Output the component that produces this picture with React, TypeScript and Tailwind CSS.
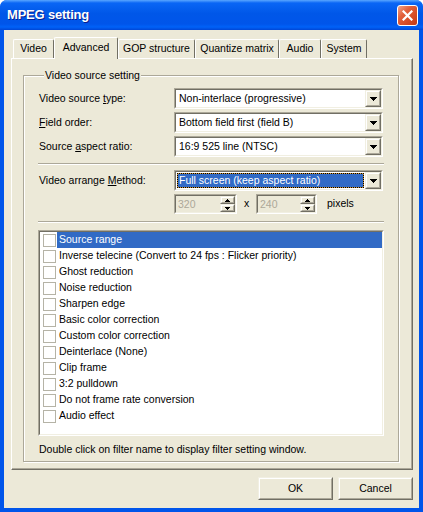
import React from "react";

const ITEMS = [
  "Source range",
  "Inverse telecine (Convert to 24 fps : Flicker priority)",
  "Ghost reduction",
  "Noise reduction",
  "Sharpen edge",
  "Basic color correction",
  "Custom color correction",
  "Deinterlace (None)",
  "Clip frame",
  "3:2 pulldown",
  "Do not frame rate conversion",
  "Audio effect",
];

const TABS = [
  { label: "Video", w: "w-[41px]" },
  { label: "Advanced", w: "w-[64px]", active: true },
  { label: "GOP structure", w: "w-[77px]" },
  { label: "Quantize matrix", w: "w-[84px]" },
  { label: "Audio", w: "w-[42px]" },
  { label: "System", w: "w-[46px]" },
];

// classic 2px sunken frame (edit, combo, listbox)
function Sunken({
  className = "",
  innerClassName = "",
  children,
}: {
  className?: string;
  innerClassName?: string;
  children?: React.ReactNode;
}) {
  return (
    <div className={`border border-t-[#ACA899] border-l-[#ACA899] border-b-white border-r-white ${className}`}>
      <div
        className={`h-full border border-t-[#716F64] border-l-[#716F64] border-b-[#F1EFE2] border-r-[#F1EFE2] ${innerClassName}`}
      >
        {children}
      </div>
    </div>
  );
}

function Raised({ className = "", children }: { className?: string; children?: React.ReactNode }) {
  return (
    <div className={`border border-t-[#F1EFE2] border-l-[#F1EFE2] border-b-[#716F64] border-r-[#716F64] ${className}`}>
      <div className="flex h-full w-full items-center justify-center border border-t-white border-l-white border-b-[#ACA899] border-r-[#ACA899] bg-[#ECE9D8]">
        {children}
      </div>
    </div>
  );
}

function ArrowDown() {
  return (
    <svg width="7" height="4" viewBox="0 0 7 4" shapeRendering="crispEdges">
      <path d="M0 0h7v1h-1v1h-1v1h-1v1h-1v-1h-1v-1h-1v-1h-1z" fill="#000" />
    </svg>
  );
}

function SmallArrow({ up }: { up?: boolean }) {
  return (
    <svg width="5" height="3" viewBox="0 0 5 3" shapeRendering="crispEdges">
      <path
        d={up ? "M2 0h1v1h1v1h1v1h-5v-1h1v-1h1z" : "M0 0h5v1h-1v1h-1v1h-1v-1h-1v-1h-1z"}
        fill="#000"
      />
    </svg>
  );
}

function Combo({ value, focused }: { value: string; focused?: boolean }) {
  return (
    <Sunken className="h-[21px] w-[209px]" innerClassName="flex items-center bg-white">
      <div className="flex min-w-0 flex-1 items-center px-[1px]">
        {focused ? (
          <div className="h-[15px] flex-1 border border-[#CE953A] bg-[#316AC5] pl-[1px] leading-[13px] whitespace-nowrap text-white outline-1 -outline-offset-1 outline-black outline-dotted">
            {value}
          </div>
        ) : (
          <span className="pl-[2px] whitespace-nowrap">{value}</span>
        )}
      </div>
      <Raised className="h-[17px] w-[16px] shrink-0">
        <ArrowDown />
      </Raised>
    </Sunken>
  );
}

function SpinEdit({ value, w }: { value: string; w: string }) {
  return (
    <Sunken className={`h-[20px] ${w}`} innerClassName="flex bg-[#ECE9D8]">
      <span className="flex-1 pl-[2px] leading-[16px] text-[#ACA899]">{value}</span>
      <div className="flex w-[15px] flex-col">
        <Raised className="h-[8px]">
          <SmallArrow up />
        </Raised>
        <Raised className="h-[8px]">
          <SmallArrow />
        </Raised>
      </div>
    </Sunken>
  );
}

function Row({ label, children }: { label: React.ReactNode; children: React.ReactNode }) {
  return (
    <div className="flex items-center">
      <span className="w-[136px] pl-[1px]">{label}</span>
      {children}
    </div>
  );
}

function Separator() {
  return <div className="h-[2px] border-t border-t-[#ACA899] border-b border-b-white" />;
}

function Button({ children }: { children: React.ReactNode }) {
  return (
    <Raised className="h-[23px] w-[75px]">
      <span>{children}</span>
    </Raised>
  );
}

function TitleBar() {
  return (
    <div className="flex h-[30px] shrink-0 items-center justify-between bg-[linear-gradient(180deg,#5AA6FF_0%,#0A66F5_10%,#0057E8_45%,#0055EA_80%,#0062F8_90%,#0046D6_100%)] pr-[5px] pl-[7px]">
      <span className="text-[13px] font-bold tracking-[-0.2px] text-white [text-shadow:1px_1px_0_#0A1E8C]">
        MPEG setting
      </span>
      <div className="flex h-[21px] w-[21px] items-center justify-center rounded-[3px] border border-white bg-[linear-gradient(135deg,#F0A48A_0%,#E2603B_35%,#D44A24_70%,#C23A18_100%)]">
        <svg width="11" height="11" viewBox="0 0 11 11">
          <path d="M1.5 1.5l8 8M9.5 1.5l-8 8" stroke="#fff" strokeWidth="2.2" strokeLinecap="square" />
        </svg>
      </div>
    </div>
  );
}

export default function App() {
  return (
    <div className="flex h-[512px] w-[423px] flex-col overflow-hidden rounded-t-[7px] bg-[#0055EA] font-['Liberation_Sans',Arial,sans-serif] text-[10.5px] text-black">
      <TitleBar />
      <div className="mx-[4px] mb-[4px] flex flex-1 flex-col bg-[#ECE9D8] pt-[7px]">
        {/* tabs */}
        <div className="ml-[9px] flex h-[21px] items-end">
          {TABS.map((t) =>
            t.active ? (
              <div
                key={t.label}
                className={`relative z-10 -mb-px flex h-[22px] items-center justify-center rounded-t-[2px] border-t border-l border-r border-t-white border-l-white border-r-[#716F64] bg-[#ECE9D8] pb-[2px] ${t.w}`}
              >
                {t.label}
              </div>
            ) : (
              <div
                key={t.label}
                className={`flex h-[19px] items-center justify-center rounded-t-[2px] border-t border-l border-r border-t-white border-l-white border-r-[#716F64] bg-[#ECE9D8] whitespace-nowrap ${t.w}`}
              >
                {t.label}
              </div>
            )
          )}
        </div>

        {/* tab page */}
        <div className="ml-[7px] h-[412px] w-[402px] border border-t-white border-l-white border-r-[#716F64] border-b-[#716F64]">
          <div className="h-full border-r border-b border-r-[#ACA899] border-b-[#ACA899] pt-[10px] pl-[11px]">
            <fieldset className="w-[376px] border border-[#ACA899] px-[14px] pb-[5px] shadow-[inset_1px_1px_0_#fff,1px_1px_0_#fff]">
              <legend className="ml-[6px] bg-[#ECE9D8] px-[1px] leading-[13px]">Video source setting</legend>
              <div className="flex flex-col pt-[6px]">
                <div className="flex flex-col gap-[3px]">
                  <Row
                    label={
                      <>
                        Video source <span className="underline">t</span>ype:
                      </>
                    }
                  >
                    <Combo value="Non-interlace (progressive)" />
                  </Row>
                  <Row
                    label={
                      <>
                        <span className="underline">F</span>ield order:
                      </>
                    }
                  >
                    <Combo value="Bottom field first (field B)" />
                  </Row>
                  <Row
                    label={
                      <>
                        Source <span className="underline">a</span>spect ratio:
                      </>
                    }
                  >
                    <Combo value="16:9 525 line (NTSC)" />
                  </Row>
                </div>

                <div className="mt-[6px]">
                  <Separator />
                </div>

                <div className="mt-[5px]">
                  <Row
                    label={
                      <>
                        Video arrange <span className="underline">M</span>ethod:
                      </>
                    }
                  >
                    <Combo value="Full screen (keep aspect ratio)" focused />
                  </Row>
                </div>

                <div className="mt-[3px] flex items-center pl-[136px]">
                  <SpinEdit value="320" w="w-[63px]" />
                  <span className="w-[19px] text-center">x</span>
                  <SpinEdit value="240" w="w-[61px]" />
                  <span className="ml-[10px]">pixels</span>
                </div>

                <div className="mt-[7px]">
                  <Separator />
                </div>

                <Sunken className="mt-[7px] h-[206px]" innerClassName="bg-white">
                  <div className="flex flex-col">
                    {ITEMS.map((item, i) => (
                      <div key={item} className="flex h-[16px] items-center">
                        <div className="ml-[3px] h-[13px] w-[13px] shrink-0 border border-[#B5B3A6] bg-white" />
                        <div
                          className={`ml-[1px] flex h-full flex-1 items-center pl-[2px] whitespace-nowrap ${
                            i === 0 ? "bg-[#316AC5] text-white" : ""
                          }`}
                        >
                          {item}
                        </div>
                      </div>
                    ))}
                  </div>
                </Sunken>

                <p className="mt-[7px] pl-[1px] leading-[13px]">
                  Double click on filter name to display filter setting window.
                </p>
              </div>
            </fieldset>
          </div>
        </div>

        {/* buttons */}
        <div className="mt-[7px] flex justify-end gap-[5px] pr-[6px]">
          <Button>OK</Button>
          <Button>Cancel</Button>
        </div>
      </div>
    </div>
  );
}
